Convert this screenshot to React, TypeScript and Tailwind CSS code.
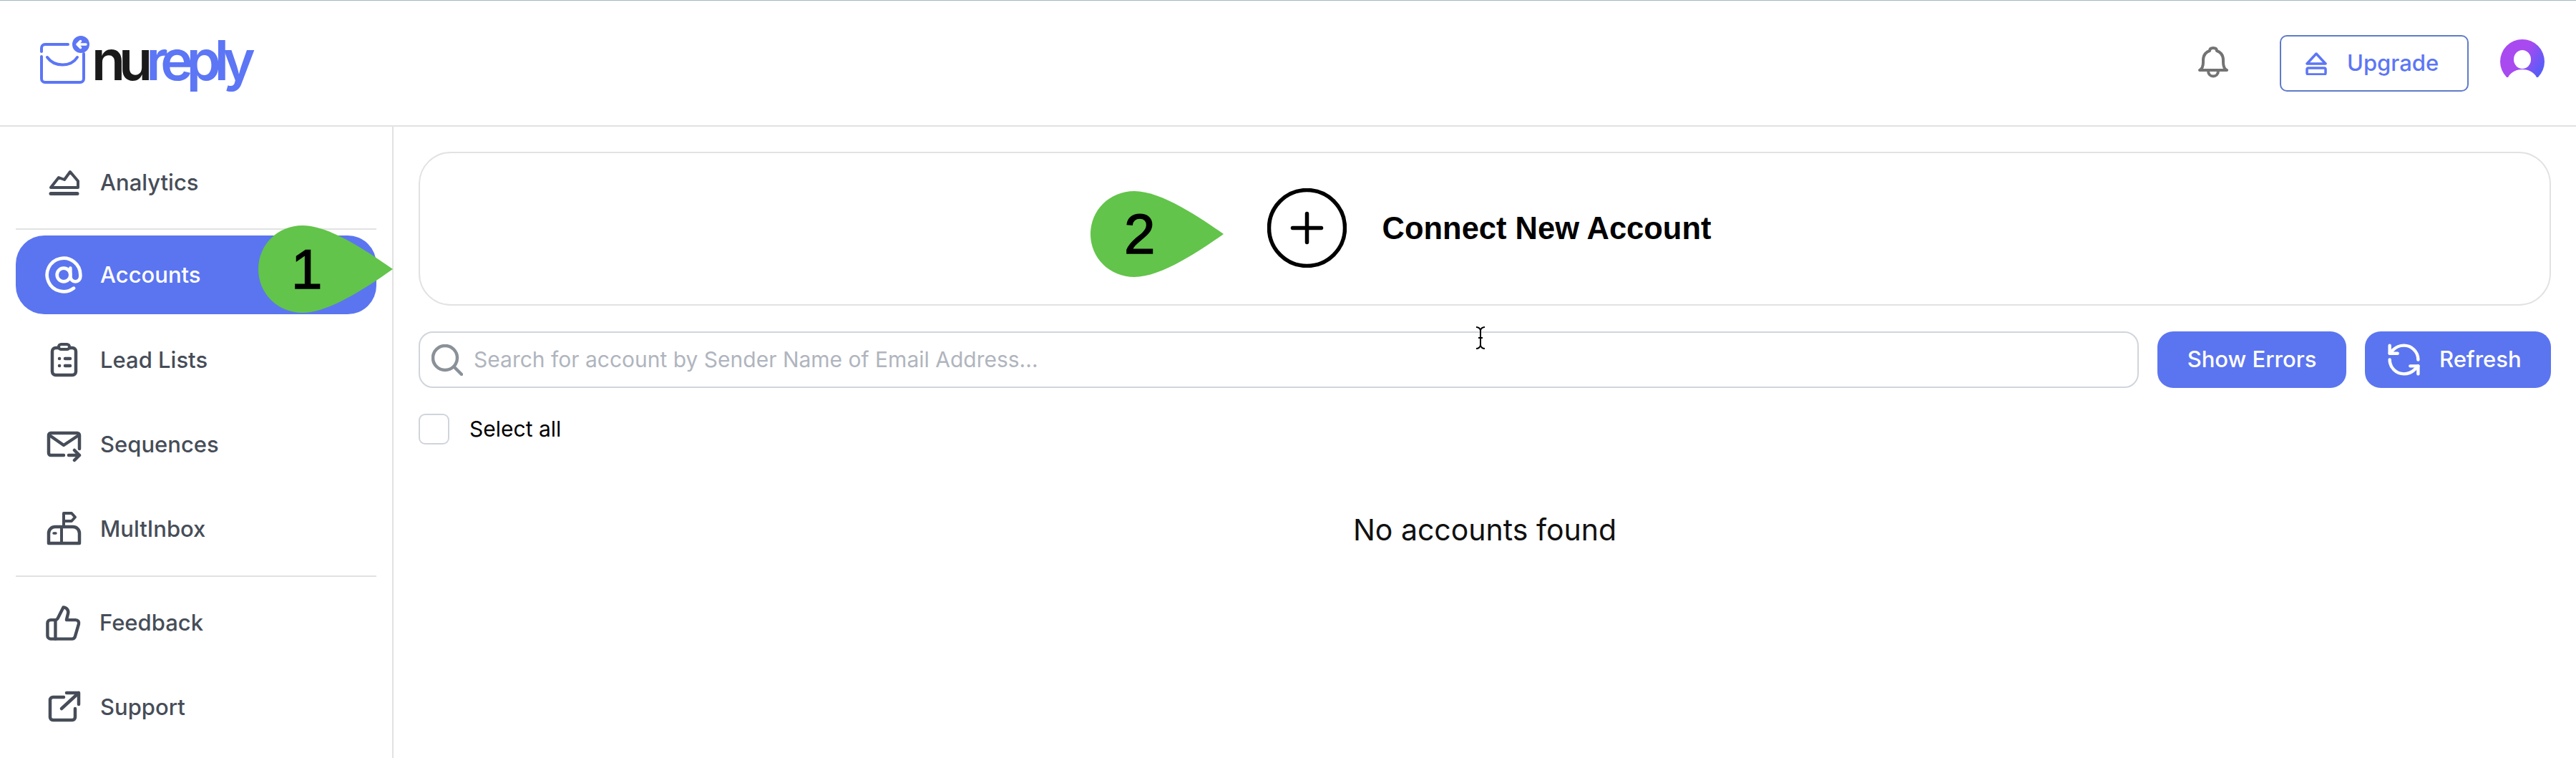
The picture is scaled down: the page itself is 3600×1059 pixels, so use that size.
import { AtSign, ThumbsUp, RefreshCcw } from "lucide-react";
import type { ReactNode } from "react";

const Icon = ({ children }: { children: ReactNode }) => (
  <svg viewBox="0 0 60 50" className="w-[60px] h-[50px] shrink-0" fill="none" stroke="currentColor" strokeLinecap="round" strokeLinejoin="round" strokeWidth="4.5">
    {children}
  </svg>
);

const Item = ({ icon, label, className = "" }: { icon: ReactNode; label: string; className?: string }) => (
  <div className={`flex items-center gap-[21px] pl-[37px] h-[118px] text-[#464d58] ${className}`}>
    {icon}
    <span className="text-[31px] font-medium">{label}</span>
  </div>
);

const Pin = ({ n, className, numClass }: { n: string; className: string; numClass: string }) => (
  <div className={`absolute ${className}`}>
    <svg viewBox="0 0 188 122" preserveAspectRatio="none" className="w-full h-full block">
      <path d="M62 0C100 0 155 38 188 61C155 84 100 122 62 122C27 122 0 95 0 61C0 27 27 0 62 0Z" fill="#62c44a" />
    </svg>
    <span className={`absolute text-[78px] leading-none text-black [-webkit-text-stroke:1.5px_black] font-['Liberation_Sans',sans-serif] ${numClass}`}>{n}</span>
  </div>
);

export default function App() {
  return (
    <div className="relative w-[3600px] h-[1059px] bg-white overflow-hidden font-['Inter',sans-serif]">
      <header className="h-[177px] border-t border-t-[#9fb7c4] border-b-2 border-b-[#e2e2e2] flex items-center pl-[55px] pr-[44px]">
        <svg viewBox="0 0 72 70" className="w-[72px] h-[70px] shrink-0 -mt-[6px]" fill="none" stroke="#5c76f5" strokeWidth="4" strokeLinecap="round" strokeLinejoin="round">
          <path d="M3 22V17a5 5 0 0 1 5-5H40" />
          <path d="M3 29V60a5 5 0 0 0 5 5H57a5 5 0 0 0 5-5V25" />
          <path d="M11 30C21 44 44 44 53 30" />
          <circle cx="58" cy="12" r="12" fill="#5c76f5" stroke="none" />
          <path d="M53 12H65M57.5 7.5L53 12L57.5 16.5" stroke="#fff" strokeWidth="3.5" />
        </svg>
        <div className="ml-[1px] -mt-[8px] text-[77px] leading-none font-semibold tracking-[-9px]">
          <span className="text-[#1a1a1a]">nu</span>
          <span className="text-[#5c76f5]">reply</span>
        </div>
        <svg viewBox="0 0 42 46" className="ml-auto w-[42px] h-[46px] shrink-0" fill="none" stroke="#737373" strokeWidth="4" strokeLinejoin="round">
          <path d="M2 33C6 31 7 28 7 22V19C7 11 12 7 16 6C16 3 18 2 21 2C24 2 26 3 26 6C30 7 35 11 35 19V22C35 28 36 31 40 33Z" />
          <path d="M14 34C14 44 28 44 28 34" />
        </svg>
        <div className="ml-[72px] w-[264px] h-[79px] border-2 border-[#5f7bc9] rounded-[10px] flex items-center pl-[34px] gap-[28px] text-[#5c76f5]">
          <svg viewBox="0 0 30 33" className="w-[30px] h-[33px] shrink-0" fill="none" stroke="#5c76f5" strokeWidth="3.5" strokeLinejoin="round">
            <path d="M15 3L28 17H2Z" />
            <rect x="2" y="23" width="26" height="9" rx="2" />
          </svg>
          <span className="text-[31px] font-medium">Upgrade</span>
        </div>
        <svg viewBox="0 0 62 62" className="ml-[44px] w-[62px] h-[62px] shrink-0 -mt-[4px]">
          <defs>
            <linearGradient id="av" x1="0.2" y1="0.3" x2="0.9" y2="0.7">
              <stop offset="0.4" stopColor="#a84af0" />
              <stop offset="1" stopColor="#5a5cf8" />
            </linearGradient>
          </defs>
          <circle cx="31" cy="31" r="31" fill="url(#av)" />
          <ellipse cx="31" cy="28" rx="12" ry="13" fill="#fff" />
          <path d="M11 53C15 45 24 42 31 42C38 42 47 45 51 53V62H11Z" fill="#fff" />
          <rect x="0" y="53" width="62" height="9" fill="#fff" />
        </svg>
      </header>

      <div className="flex h-[882px]">
        <aside className="w-[550px] shrink-0 border-r-2 border-r-[#e2e2e2] pl-[22px] pr-[22px] pt-[19px]">
          <Item
            label="Analytics"
            icon={
              <Icon>
                <path d="M12 32L23 18L31 21L39 10L50 23V32Z" strokeWidth="4" />
                <path d="M12 40.5H49" strokeWidth="5" />
              </Icon>
            }
          />
          <div className="h-[2px] bg-[#e2e2e2] mt-[5px]" />
          <div className="mt-[8px] h-[110px] rounded-[40px] bg-[#5b75f0] flex items-center gap-[21px] pl-[37px] text-white">
            <div className="w-[60px] flex justify-center shrink-0">
              <AtSign size={56} strokeWidth={2} />
            </div>
            <span className="text-[31px] font-medium">Accounts</span>
          </div>
          <div className="mt-[5px]">
            <Item
              label="Lead Lists"
              icon={
                <Icon>
                  <rect x="14" y="8" width="33" height="38" rx="5" />
                  <rect x="23" y="3" width="15" height="7" rx="3.5" fill="#fff" strokeWidth="4" />
                  <path d="M32 23H39M32 33H39" />
                  <path d="M24 23H24.1M24 33H24.1" />
                </Icon>
              }
            />
            <Item
              label="Sequences"
              icon={
                <Icon>
                  <path d="M30 40H12a3 3 0 0 1-3-3V12a3 3 0 0 1 3-3H49a3 3 0 0 1 3 3V31" />
                  <path d="M10 12L30 26L51 12" />
                  <path d="M37 40H52M45 33L52 40L45 47" />
                </Icon>
              }
            />
            <Item
              label="MultInbox"
              icon={
                <Icon>
                  <path d="M30 21V3H41L46 8.5L41 14H30" strokeWidth="4" />
                  <path d="M9 45V31a9 9 0 0 1 9-9H43a9 9 0 0 1 9 9V45Z" />
                  <path d="M27 24V45" strokeWidth="4" />
                  <path d="M16 31H19" strokeWidth="3.5" />
                </Icon>
              }
            />
          </div>
          <div className="h-[2px] bg-[#e2e2e2] mt-[6px]" />
          <div className="mt-[5px]">
            <Item
              label="Feedback"
              icon={
                <div className="w-[60px] flex justify-center shrink-0 -ml-[1px]">
                  <ThumbsUp size={53} strokeWidth={2} />
                </div>
              }
            />
            <Item
              label="Support"
              icon={
                <Icon>
                  <path d="M30 11H15a4 4 0 0 0-4 4V39a4 4 0 0 0 4 4H42a4 4 0 0 0 4-4V27" />
                  <path d="M27 27L51 5M34 5H51V21" />
                </Icon>
              }
            />
          </div>
        </aside>

        <main className="flex-1 pl-[35px] pr-[35px] pt-[35px]">
          <div className="h-[215px] border-2 border-[#e2e2e4] rounded-[45px] flex items-center justify-center gap-[50px] pl-[12px]">
            <svg viewBox="0 0 111 111" className="w-[111px] h-[111px] shrink-0 -mt-[2px]" fill="none" stroke="#000" strokeWidth="5.5" strokeLinecap="round">
              <circle cx="55.5" cy="55.5" r="53" />
              <path d="M35.5 55.5H75.5M55.5 35.5V75.5" />
            </svg>
            <span className="text-[43.5px] font-bold text-black font-['Liberation_Sans',sans-serif]">Connect New Account</span>
          </div>

          <div className="mt-[36px] flex gap-[26px]">
            <div className="flex-1 h-[79px] border-2 border-[#d0d5dc] rounded-[20px] flex items-center pl-[16px] gap-[15px]">
              <svg viewBox="0 0 44 44" className="w-[44px] h-[44px] shrink-0" fill="none" stroke="#8a9198" strokeWidth="4.5" strokeLinecap="round">
                <circle cx="19" cy="19" r="17" />
                <path d="M32 32L42 42" />
              </svg>
              <input
                readOnly
                placeholder="Search for account by Sender Name of Email Address..."
                className="flex-1 bg-transparent outline-none text-[30px] placeholder:text-[#b0b5be]"
              />
            </div>
            <button className="w-[264px] h-[79px] rounded-[22px] bg-[#5b75f0] text-white text-[31px] font-medium">Show Errors</button>
            <button className="w-[260px] h-[79px] rounded-[22px] bg-[#5b75f0] text-white text-[31px] font-medium flex items-center pl-[28px] gap-[23px]">
              <RefreshCcw size={53} strokeWidth={2} />
              <span>Refresh</span>
            </button>
          </div>

          <div className="mt-[35px] flex items-center gap-[28px]">
            <div className="w-[43px] h-[43px] border-2 border-[#d0d5dc] rounded-[9px]" />
            <span className="text-[30px] text-black">Select all</span>
          </div>

          <div className="mt-[88px] text-center text-[41px] leading-[60px] text-[#111]">No accounts found</div>
        </main>
      </div>

      <Pin n="1" className="left-[361px] top-[315px] w-[188px] h-[122px]" numClass="left-[46px] top-[22px]" />
      <Pin n="2" className="left-[1524px] top-[267px] w-[186px] h-[120px]" numClass="left-[47px] top-[21px]" />

      <svg viewBox="0 0 16 32" className="absolute left-[2061px] top-[456px] w-[16px] h-[32px]" fill="none" stroke="#000" strokeWidth="2">
        <path d="M2 1C5 1 8 3 8 6V26C8 29 5 31 2 31M14 1C11 1 8 3 8 6M8 26C8 29 11 31 14 31M5 16H11" />
      </svg>
    </div>
  );
}
